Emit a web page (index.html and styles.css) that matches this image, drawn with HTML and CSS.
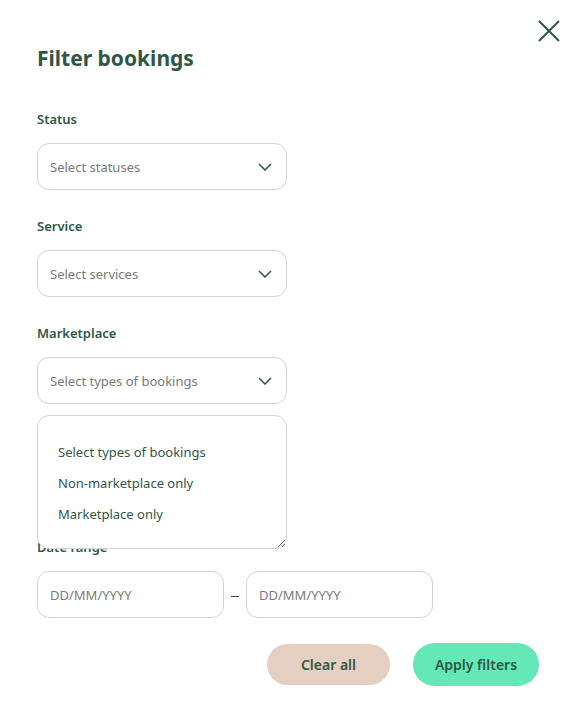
FILE: index.html
```html
<!DOCTYPE html>
<html>
<head>
<meta charset="utf-8">
<link rel="stylesheet" href="styles.css">
</head>
<body>
<div class="modal">
  <button class="close" aria-label="Close">
    <svg width="24" height="24" viewBox="0 0 24 24"><path d="M2 2 L22 22 M22 2 L2 22" stroke="#2f5747" stroke-width="2" fill="none"/></svg>
  </button>
  <h1 class="title">Filter bookings</h1>

  <div class="field">
    <div class="label">Status</div>
    <div class="select"><span class="placeholder">Select statuses</span><svg class="chev" width="14" height="8" viewBox="0 0 14 8"><path d="M1 1 L7 7 L13 1" stroke="#2f5747" stroke-width="1.5" fill="none"/></svg></div>
  </div>

  <div class="field">
    <div class="label">Service</div>
    <div class="select"><span class="placeholder">Select services</span><svg class="chev" width="14" height="8" viewBox="0 0 14 8"><path d="M1 1 L7 7 L13 1" stroke="#2f5747" stroke-width="1.5" fill="none"/></svg></div>
  </div>

  <div class="field">
    <div class="label">Marketplace</div>
    <div class="select"><span class="placeholder">Select types of bookings</span><svg class="chev" width="14" height="8" viewBox="0 0 14 8"><path d="M1 1 L7 7 L13 1" stroke="#2f5747" stroke-width="1.5" fill="none"/></svg></div>
    <div class="listbox">
      <div class="option">Select types of bookings</div>
      <div class="option">Non-marketplace only</div>
      <div class="option">Marketplace only</div>
    </div>
  </div>

  <div class="field date-field">
    <div class="label">Date range</div>
    <div class="date-row">
      <div class="date"><span class="placeholder">DD/MM/YYYY</span></div>
      <span class="dash"></span>
      <div class="date"><span class="placeholder">DD/MM/YYYY</span></div>
    </div>
  </div>

  <div class="actions">
    <button class="btn clear">Clear all</button>
    <button class="btn apply">Apply filters</button>
  </div>
</div>
</body>
</html>
```

FILE: styles.css
```css
html, body {
  margin: 0;
  padding: 0;
  background: #ffffff;
}
body {
  font-family: "Noto Sans", "Open Sans", sans-serif;
  color: #2f5747;
}
.modal {
  position: relative;
  width: 577px;
  height: 705px;
  box-sizing: border-box;
  padding: 42px 0 0 37px;
}
.close {
  position: absolute;
  top: 19px;
  left: 537px;
  width: 24px;
  height: 24px;
  padding: 0;
  border: 0;
  background: none;
  display: block;
}
.close svg { display: block; }
.title {
  margin: 0;
  font-size: 21px;
  line-height: 32px;
  font-weight: 700;
  color: #2f5747;
}
.field {
  margin-top: 27px;
  width: 250px;
}
.title + .field { margin-top: 36px; }
.label {
  font-size: 13px;
  line-height: 18px;
  font-weight: 600;
  color: #2f5747;
  margin-bottom: 15px;
}
.select {
  height: 47px;
  box-sizing: border-box;
  border: 1px solid #d2d4d3;
  border-radius: 12px;
  display: flex;
  align-items: center;
  justify-content: space-between;
  padding: 0 14px 0 12px;
}
.placeholder {
  font-size: 13px;
  color: #7a7a7a;
}
.chev { display: block; }
.listbox {
  position: relative;
  z-index: 1;
  background: #fff;
  margin-top: 11px;
  height: 134px;
  box-sizing: border-box;
  border: 1px solid #d2d4d3;
  border-radius: 12px;
  padding: 21px 20px 0 20px;
  resize: both;
  overflow: auto;
}
.option {
  font-size: 13px;
  line-height: 31px;
  color: #2f5747;
}
.date-field {
  width: auto;
  margin-top: -11px;
}
.date-row {
  display: flex;
  align-items: center;
}
.date {
  width: 187px;
  height: 47px;
  box-sizing: border-box;
  border: 1px solid #d2d4d3;
  border-radius: 12px;
  display: flex;
  align-items: center;
  padding-left: 12px;
}
.dash {
  width: 22px;
  display: flex;
  justify-content: center;
}
.dash::before {
  content: "";
  width: 8px;
  height: 1.5px;
  margin-top: 4px;
  background: #2f5747;
}
.actions {
  display: flex;
  justify-content: flex-end;
  align-items: center;
  gap: 23px;
  margin-top: 25px;
  padding-right: 38px;
}
.btn {
  border: 0;
  font-family: inherit;
  font-size: 14px;
  font-weight: 600;
  color: #2f5747;
}
.clear {
  width: 123px;
  height: 41px;
  border-radius: 21px;
  background: #e5cfc0;
}
.apply {
  width: 126px;
  height: 43px;
  border-radius: 22px;
  background: #64e8b8;
}
```
